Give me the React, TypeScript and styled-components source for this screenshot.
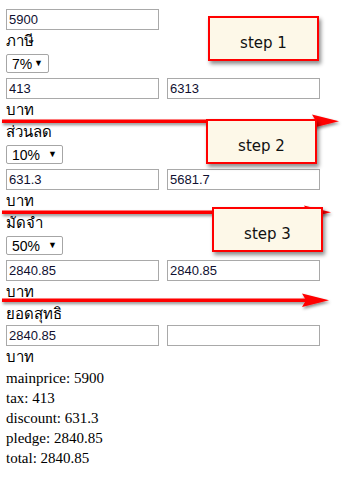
import React from 'react';
import styled, { createGlobalStyle } from 'styled-components';

interface Step {
  title: string;
  select: string;
  selectWidth: number;
  left: string;
  right: string;
}

const steps: Step[] = [
  { title: 'ภาษี', select: '7%', selectWidth: 43, left: '413', right: '6313' },
  { title: 'ส่วนลด', select: '10%', selectWidth: 57, left: '631.3', right: '5681.7' },
  { title: 'มัดจำ', select: '50%', selectWidth: 57, left: '2840.85', right: '2840.85' },
];

const notes = [
  { label: 'step 1', x: 208, y: 16 },
  { label: 'step 2', x: 206, y: 119 },
  { label: 'step 3', x: 212, y: 207 },
];

const arrows = [
  { y: 121, end: 339 },
  { y: 212, end: 331 },
  { y: 300, end: 329 },
];

const summary = [
  ['mainprice', '5900'],
  ['tax', '413'],
  ['discount', '631.3'],
  ['pledge', '2840.85'],
  ['total', '2840.85'],
];

const Arrow = ({ y, end }: { y: number; end: number }) => (
  <ArrowSvg style={{ top: y - 10 }} width={343} height={22} viewBox="0 0 343 22">
    <defs>
      <filter id={`sh${y}`} x="-5%" y="-50%" width="110%" height="200%">
        <feDropShadow dx="1" dy="2" stdDeviation="1.5" floodColor="#000" floodOpacity="0.45" />
      </filter>
    </defs>
    <g filter={`url(#sh${y})`}>
      <rect x={2} y={8.5} width={end - 24} height={3.5} fill="#ff0000" />
      <path d={`M${end} 10.2 L${end - 27} 3.5 L${end - 23} 10.2 L${end - 27} 17 Z`} fill="#ff0000" />
    </g>
  </ArrowSvg>
);

const App = () => {
  return (
    <>
      <GlobalStyle />
      <Page>
        <Input defaultValue="5900" />
        {steps.map((s) => (
          <React.Fragment key={s.title}>
            <Label>{s.title}</Label>
            <SelectBox $width={s.selectWidth}>
              <span>{s.select}</span>
              <Caret>▼</Caret>
            </SelectBox>
            <Row $gapTop={5}>
              <Input defaultValue={s.left} />
              <Input defaultValue={s.right} />
            </Row>
            <Label>บาท</Label>
          </React.Fragment>
        ))}
        <Label>ยอดสุทธิ</Label>
        <Row $gapTop={0}>
          <Input defaultValue="2840.85" />
          <Input defaultValue="" />
        </Row>
        <Label>บาท</Label>
        <Summary>
          {summary.map(([k, v]) => (
            <SummaryLine key={k}>
              {k}: {v}
            </SummaryLine>
          ))}
        </Summary>

        {arrows.map((a) => (
          <Arrow key={a.y} y={a.y} end={a.end} />
        ))}
        {notes.map((n) => (
          <Note key={n.label} style={{ left: n.x, top: n.y }}>
            {n.label}
          </Note>
        ))}
      </Page>
    </>
  );
};

const GlobalStyle = createGlobalStyle`
  html, body {
    margin: 0;
    padding: 0;
    background: #ffffff;
  }
`;

const Page = styled.div`
  position: relative;
  width: 343px;
  height: 496px;
  overflow: hidden;
  padding: 9px 0 0 6px;
  box-sizing: border-box;
  display: flex;
  flex-direction: column;
  align-items: flex-start;
  font-family: 'DejaVu Sans', 'Noto Sans', sans-serif;
  color: #000000;
`;

const Input = styled.input`
  width: 153px;
  height: 21px;
  box-sizing: border-box;
  margin: 0;
  padding: 1px 2px;
  border: 1px solid #a9a9a9;
  border-radius: 0;
  font-family: 'Liberation Sans', Arial, sans-serif;
  font-size: 13px;
  color: #101030;
  outline: none;
`;

const Label = styled.div`
  height: 22px;
  line-height: 22px;
  font-size: 15px;
  white-space: nowrap;
`;

const SelectBox = styled.div<{ $width: number }>`
  width: ${(p) => p.$width}px;
  height: 19px;
  box-sizing: border-box;
  margin-top: 2px;
  padding: 0 5px;
  border: 1px solid #a6a6a6;
  border-radius: 2px;
  display: flex;
  align-items: center;
  justify-content: space-between;
  font-family: 'Liberation Sans', Arial, sans-serif;
  font-size: 14px;
  color: #000;
`;

const Caret = styled.span`
  font-size: 9px;
  line-height: 1;
`;

const Row = styled.div<{ $gapTop: number }>`
  display: flex;
  gap: 8px;
  margin-top: ${(p) => p.$gapTop}px;
`;

const Summary = styled.div`
  display: flex;
  flex-direction: column;
  font-family: 'Liberation Serif', 'Times New Roman', serif;
  font-size: 15px;
`;

const SummaryLine = styled.div`
  height: 20px;
  line-height: 20px;
`;

const ArrowSvg = styled.svg`
  position: absolute;
  left: 0;
  pointer-events: none;
`;

const Note = styled.div`
  position: absolute;
  width: 111px;
  height: 45px;
  box-sizing: border-box;
  padding-top: 8px;
  border: 2px solid #ff0000;
  background: #fdf8e8;
  box-shadow: 2px 3px 4px rgba(0, 0, 0, 0.45);
  display: flex;
  align-items: center;
  justify-content: center;
  font-family: 'DejaVu Sans', 'Liberation Sans', sans-serif;
  font-size: 15px;
  color: #111;
`;

export default App;
